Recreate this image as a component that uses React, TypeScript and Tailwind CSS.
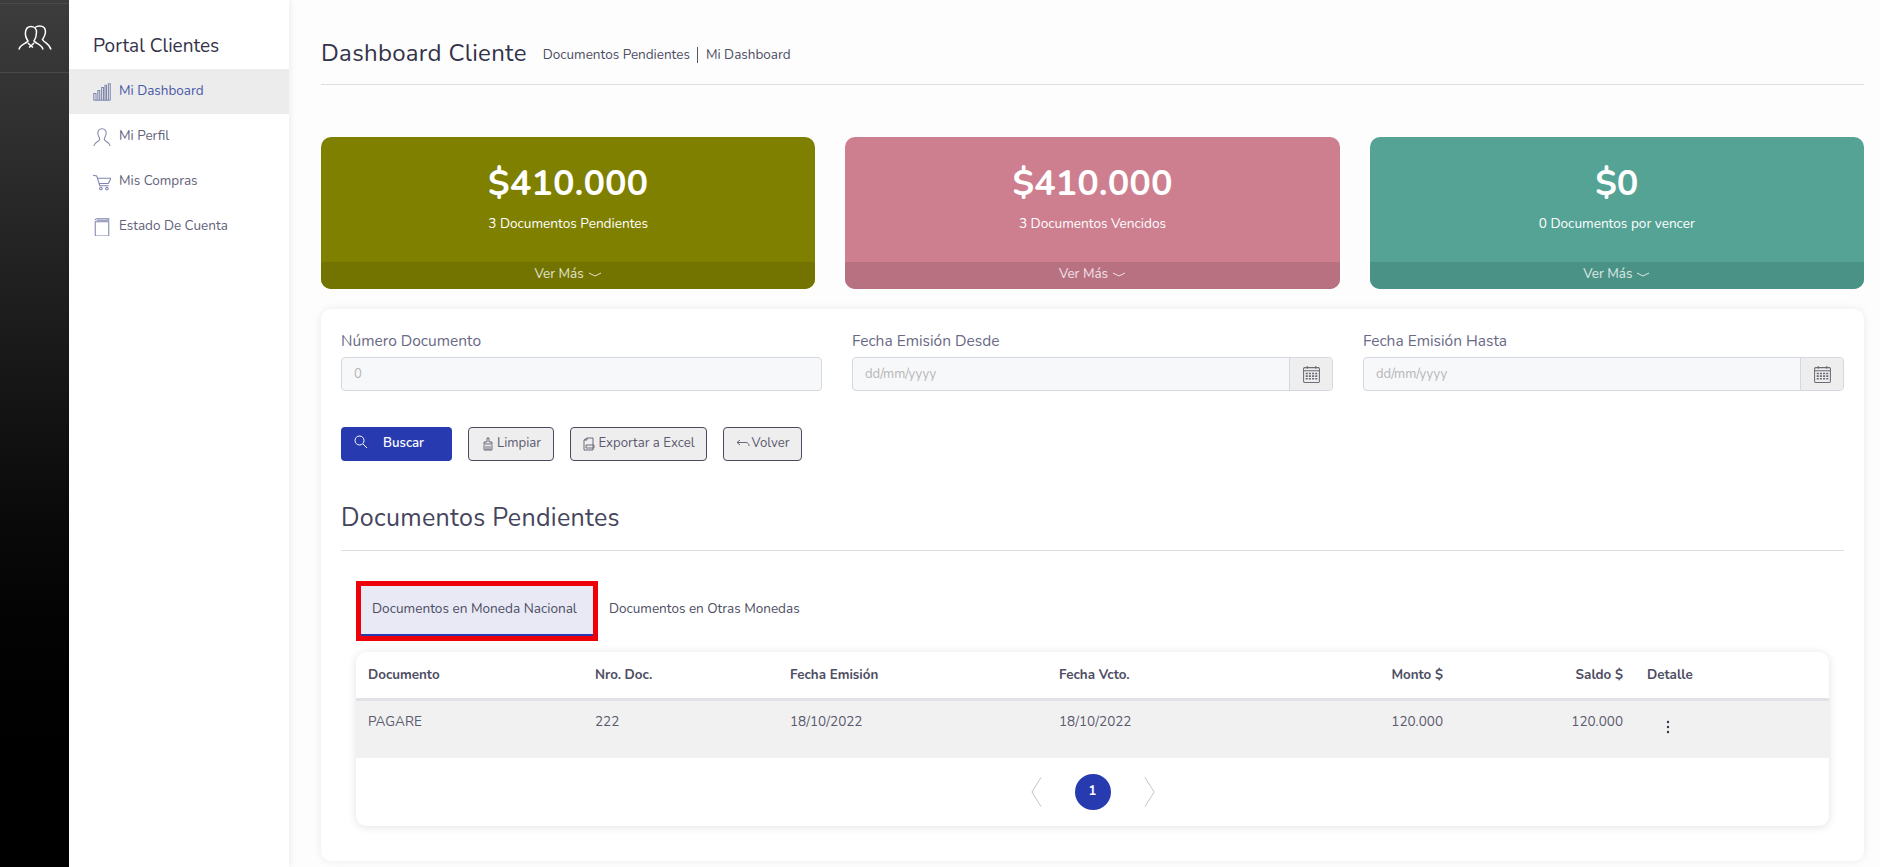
import type { ReactNode } from 'react'

const font = { fontFamily: 'Nunito, Lato, "Noto Sans", sans-serif' }

function Line({ children, className, size = 24 }: { children: ReactNode; className?: string; size?: number }) {
    return (
        <svg viewBox="0 0 24 24" width={size} height={size} fill="none" stroke="currentColor" strokeWidth={1.4} className={className}>
            {children}
        </svg>
    )
}

const navItems = [
    {
        label: 'Mi Dashboard',
        active: true,
        icon: <path d="M1 23V14H4V23M1 23H23M6.5 23V10H9V23M11.5 23V6H14V23M16 23V3H18V23M20.5 23V1H23V23" />,
    },
    {
        label: 'Mi Perfil',
        active: false,
        icon: <path d="M12 1C8 1 6 4 6.5 8C7 11 9 13 9 15C9 18 2 18 1 24M12 1C16 1 18 4 17.5 8C17 11 15 13 15 15C15 18 22 18 23 24" />,
    },
    {
        label: 'Mis Compras',
        active: false,
        icon: <path d="M0 3L5 4L9 17H21M6 7H24L20.5 14H8M10.5 19a1.7 1.7 0 1 0 .01 0M18.5 19a1.7 1.7 0 1 0 .01 0" />,
    },
    {
        label: 'Estado De Cuenta',
        active: false,
        icon: <path d="M3 5V22C3 23 4 24 5 24H21V5ZM3 3C3 1.5 4 1 5 1H21V3H5" />,
    },
]

const cards = [
    { amount: '$410.000', label: '3 Documentos Pendientes', bg: 'bg-[#808000]', foot: 'bg-[#737300]' },
    { amount: '$410.000', label: '3 Documentos Vencidos', bg: 'bg-[#cd7e8f]', foot: 'bg-[#b87181]' },
    { amount: '$0', label: '0 Documentos por vencer', bg: 'bg-[#54a395]', foot: 'bg-[#4b9286]' },
]

const row = 'grid grid-cols-[227px_195px_269px_241px_143px_180px_1fr] px-3'

function CalendarIcon() {
    return (
        <svg viewBox="0 0 18 18" width={19} height={19} fill="none" stroke="#6b6b74" strokeWidth={1}>
            <rect x="1.5" y="2.5" width="15" height="14" rx="1" />
            <path d="M1.5 5.5H16.5M5 1V3.5M13 1V3.5" />
            <path d="M3.5 8H14.5M3.5 10.5H14.5M3.5 13H14.5" strokeDasharray="2 1" strokeWidth={1.5} />
        </svg>
    )
}

function DateField({ label }: { label: string }) {
    return (
        <div className="flex-1">
            <label className="block text-[15.5px] leading-[24px] text-[#6a6a85] mb-[4px]">{label}</label>
            <div className="flex h-[34px] rounded-[4px] border border-[#d5d8de] bg-[#f7f8fa]">
                <span className="flex-1 px-3 text-[13px] leading-[32px] text-[#b5b5b5]">dd/mm/yyyy</span>
                <span className="flex w-[43px] items-center justify-center border-l border-[#d5d8de] bg-[#eeeeee] rounded-r-[4px]">
                    <CalendarIcon />
                </span>
            </div>
        </div>
    )
}

function OutlineButton({ icon, label, className }: { icon: ReactNode; label: string; className: string }) {
    return (
        <button className={`flex h-[34px] items-center justify-center gap-[2px] rounded-[4px] border border-[#4a4a5e] bg-[#eeeeee] text-[13.2px] text-[#5a5a6e] ${className}`}>
            {icon}
            {label}
        </button>
    )
}

export default function App() {
    return (
        <div className="flex h-[867px] overflow-hidden bg-white text-[#4d4d63]" style={font}>
            {/* Icon rail */}
            <aside className="w-[69px] shrink-0 bg-gradient-to-b from-[#3d3d3d] to-black">
                <div className="h-[4px] border-b border-[#4a4a4a]" />
                <div className="flex h-[69px] items-center justify-center border-b border-[#4a4a4a]">
                    <svg viewBox="0 0 34 26" width={34} height={26} fill="none" stroke="#ffffff" strokeWidth={1.5}>
                        <path d="M1 24.5C2 19 8 19 10 16C8 13 7 10 7.5 7C8 3 10.5 1.5 13 1.5C16 1.5 18.5 3.5 18.5 7C18.5 10 18 13 16 16C18 19 24 19 25 24.5" />
                        <path d="M17 2.5C18.5 1.5 20 1 21.5 1C25 1 27.5 3 27.5 7C27.5 10 26 12 24.5 14.5C25.5 17.5 31 18 33 24.5" />
                        <path d="M10 18L13 21L16 18M11 22.5L13 21L15 22.5" />
                    </svg>
                </div>
            </aside>

            {/* Menu */}
            <nav className="w-[220px] shrink-0 bg-white pt-[34px] shadow-[2px_0_6px_rgba(0,0,0,0.06)] z-10">
                <h2 className="pl-6 text-[19px] leading-[24px] text-[#33334a] mb-[11px]">Portal Clientes</h2>
                <ul>
                    {navItems.map((item) => (
                        <li
                            key={item.label}
                            className={`flex h-[45px] items-center gap-[8px] pl-6 text-[13.5px] ${item.active ? 'bg-[#ececec] text-[#4a58a8]' : 'text-[#62627a]'}`}
                        >
                            <Line size={18} className="text-[#7f86ad]">{item.icon}</Line>
                            {item.label}
                        </li>
                    ))}
                </ul>
            </nav>

            {/* Main */}
            <main className="flex-1 bg-[#fdfdfd] pl-[32px] pr-[16px]">
                <header className="flex h-[85px] items-center border-b border-[#dedede] pt-[22px] mb-[52px]">
                    <h1 className="text-[24px] text-[#33334a] tracking-[0.3px]">Dashboard Cliente</h1>
                    <span className="ml-4 mt-[3px] border-r border-[#55556a] pr-[7px] text-[13.5px] leading-[16px]">Documentos Pendientes</span>
                    <span className="mt-[3px] pl-[8px] text-[13.5px] leading-[16px]">Mi Dashboard</span>
                </header>

                <section className="flex gap-[30px] mb-[20px]">
                    {cards.map((card, i) => (
                        <div key={i} className={`flex h-[152px] flex-1 flex-col overflow-hidden rounded-[10px] text-white ${card.bg}`}>
                            <div className="flex-1 pt-[20px] text-center">
                                <p className="text-[36px] leading-[54px] font-bold">{card.amount}</p>
                                <p className="mt-[3px] text-[13.6px] leading-[20px]">{card.label}</p>
                            </div>
                            <div className={`flex h-[27px] items-center justify-center gap-1 pb-[2px] text-[13.5px] text-white/80 ${card.foot}`}>
                                Ver Más
                                <svg viewBox="0 0 14 6" width={14} height={6} fill="none" stroke="currentColor" strokeWidth={1}>
                                    <path d="M1 1L7 4L13 1" />
                                </svg>
                            </div>
                        </div>
                    ))}
                </section>

                <section className="h-[552px] rounded-[10px] bg-white px-[20px] pt-[20px] shadow-[0_0_8px_rgba(0,0,0,0.08)]">
                    <div className="flex gap-[30px] mb-[36px]">
                        <div className="flex-1">
                            <label className="block text-[15.5px] leading-[24px] text-[#6a6a85] mb-[4px]">Número Documento</label>
                            <div className="h-[34px] rounded-[4px] border border-[#d5d8de] bg-[#f7f8fa] px-3 text-[13px] leading-[32px] text-[#b5b5b5]">0</div>
                        </div>
                        <DateField label="Fecha Emisión Desde" />
                        <DateField label="Fecha Emisión Hasta" />
                    </div>

                    <div className="flex gap-[16px] mb-[41px]">
                        <button className="flex h-[34px] w-[111px] items-center gap-[15px] rounded-[4px] bg-[#273ab0] pl-[13px] text-[13.2px] font-semibold text-white">
                            <svg viewBox="0 0 14 14" width={14} height={14} fill="none" stroke="currentColor" strokeWidth={1} className="-mt-[4px]">
                                <circle cx="5.5" cy="5.5" r="4.5" />
                                <path d="M9 9L13 13" />
                            </svg>
                            Buscar
                        </button>
                        <OutlineButton
                            className="w-[86px]"
                            label="Limpiar"
                            icon={
                                <svg viewBox="0 0 14 14" width={14} height={14} fill="none" stroke="#6a6a7a" strokeWidth={1}>
                                    <path d="M6 1H8V5H11V7H3V5H6ZM3 7.5V13H11V7.5M5 9V13M7 9V13M9 9V13" />
                                </svg>
                            }
                        />
                        <OutlineButton
                            className="w-[137px]"
                            label="Exportar a Excel"
                            icon={
                                <svg viewBox="0 0 14 14" width={14} height={14} fill="none" stroke="#6a6a7a" strokeWidth={1}>
                                    <path d="M2 13V3L5 1H11V13ZM2 3H5V1M4 8H12V11H4Z" />
                                </svg>
                            }
                        />
                        <OutlineButton
                            className="w-[79px]"
                            label="Volver"
                            icon={
                                <svg viewBox="0 0 14 10" width={14} height={10} fill="none" stroke="#6a6a7a" strokeWidth={1}>
                                    <path d="M4 1L1 3.5L4 6M1 3.5H10C12 3.5 13 5 13 7" />
                                </svg>
                            }
                        />
                    </div>

                    <h3 className="border-b border-[#dedede] pb-[16px] text-[25px] leading-[32px] text-[#45455c] tracking-[0.3px] mb-[30px]">Documentos Pendientes</h3>

                    <div className="mx-[15px]">
                        <div className="flex items-stretch mb-[11px]">
                            <div className="flex h-[60px] w-[242px] border-[5px] border-[#ee0008]">
                                <span className="flex-1 bg-[#e8e9f5] border-b-2 border-[#273ab0] pl-[11px] text-[13.6px] leading-[46px]">Documentos en Moneda Nacional</span>
                            </div>
                            <span className="pl-[11px] text-[13.5px] leading-[56px]">Documentos en Otras Monedas</span>
                        </div>

                        <div className="h-[174px] overflow-hidden rounded-[10px] bg-white shadow-[0_1px_8px_rgba(0,0,0,0.12)]">
                            <div className={`${row} h-[49px] items-center border-b-[3px] border-[#e2e2e6] text-[13.4px] font-bold`}>
                                <span>Documento</span>
                                <span>Nro. Doc.</span>
                                <span>Fecha Emisión</span>
                                <span>Fecha Vcto.</span>
                                <span className="text-right">Monto $</span>
                                <span className="text-right">Saldo $</span>
                                <span className="pl-[24px]">Detalle</span>
                            </div>
                            <div className={`${row} h-[57px] bg-[#f1f1f1] pt-[11px] text-[13.5px] text-[#5a5a6e]`}>
                                <span>PAGARE</span>
                                <span>222</span>
                                <span>18/10/2022</span>
                                <span>18/10/2022</span>
                                <span className="text-right">120.000</span>
                                <span className="text-right">120.000</span>
                                <span className="pl-[43px]">
                                    <svg viewBox="0 0 4 14" width={4} height={14} className="mt-[8px]" fill="#33334a">
                                        <circle cx="2" cy="2" r="1.2" />
                                        <circle cx="2" cy="7" r="1.2" />
                                        <circle cx="2" cy="12" r="1.2" />
                                    </svg>
                                </span>
                            </div>
                            <div className="flex h-[68px] items-center justify-center gap-[33px]">
                                <svg viewBox="0 0 12 34" width={11} height={34} fill="none" stroke="#c0c0c0" strokeWidth={1}>
                                    <path d="M11 1L1 17L11 33" />
                                </svg>
                                <span className="flex h-9 w-9 items-center justify-center rounded-full bg-[#273ab0] text-[13px] font-bold text-white">1</span>
                                <svg viewBox="0 0 12 34" width={11} height={34} fill="none" stroke="#c0c0c0" strokeWidth={1}>
                                    <path d="M1 1L11 17L1 33" />
                                </svg>
                            </div>
                        </div>
                    </div>
                </section>
            </main>
        </div>
    )
}
